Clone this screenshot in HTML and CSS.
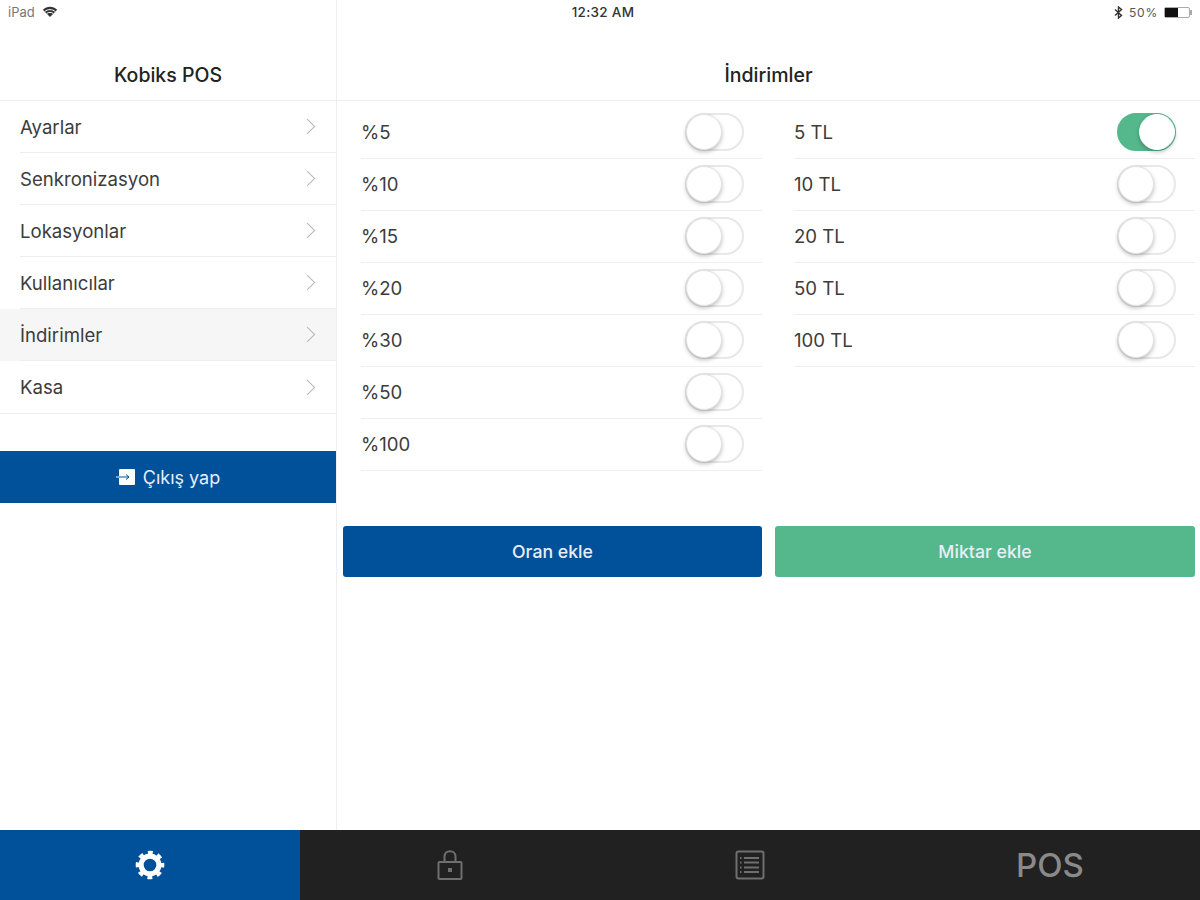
FILE: index.html
```html
<!DOCTYPE html>
<html>
  <head>
    <title>Kobiks POS</title>
    <link rel="stylesheet" href="styles.css">
  </head>
  <body>
    <div class="app">
      <div class="status-bar">
        <div class="status-left">
          <span>iPad</span>
          <svg class="wifi" width="16" height="12" viewBox="0 0 16 12">
            <path d="M8 11 .8 3.800C5-.3 11-.3 15.200 3.800Z" fill="#333"/>
            <path d="M2.800 5.500C5.700 3 10.300 3 13.200 5.500M4.700 7.500C6.600 6 9.400 6 11.300 7.500" stroke="#fff" stroke-width="1" fill="none"/>
          </svg>
        </div>
        <div class="status-time">12:32 AM</div>
        <div class="status-right">
          <svg width="9" height="13" viewBox="0 0 9 13">
            <path d="M1 3.500 7.500 9.500 4.500 12V1L7.500 3.500 1 9.500" stroke="#333" stroke-width="1.400" fill="none"/>
          </svg>
          <span class="status-percent">50%</span>
          <span class="battery"><span class="battery-level"></span></span>
        </div>
      </div>

      <div class="content">
        <div class="sidebar">
          <div class="nav-title">Kobiks POS</div>
          <div class="menu">
            <div class="menu-item"><div class="menu-row"><span>Ayarlar</span><span class="chevron"></span></div></div>
            <div class="menu-item"><div class="menu-row"><span>Senkronizasyon</span><span class="chevron"></span></div></div>
            <div class="menu-item"><div class="menu-row"><span>Lokasyonlar</span><span class="chevron"></span></div></div>
            <div class="menu-item"><div class="menu-row"><span>Kullanıcılar</span><span class="chevron"></span></div></div>
            <div class="menu-item active"><div class="menu-row"><span>İndirimler</span><span class="chevron"></span></div></div>
            <div class="menu-item last"><div class="menu-row"><span>Kasa</span><span class="chevron"></span></div></div>
          </div>
          <div class="logout">
            <svg width="20" height="16" viewBox="0 0 20 16">
              <rect x="3" y="0" width="16" height="16" rx="1" fill="#fff"/>
              <path d="M0 8H13M10 5.500 13 8 10 10.500" stroke="#01509a" stroke-width="1" fill="none"/>
              <path d="M0 8H3" stroke="#fff" stroke-width="1"/>
            </svg>
            <span>Çıkış yap</span>
          </div>
        </div>

        <div class="main">
          <div class="nav-title">İndirimler</div>
          <div class="columns">
            <div class="option-list">
              <div class="option"><span>%5</span><span class="toggle"></span></div>
              <div class="option"><span>%10</span><span class="toggle"></span></div>
              <div class="option"><span>%15</span><span class="toggle"></span></div>
              <div class="option"><span>%20</span><span class="toggle"></span></div>
              <div class="option"><span>%30</span><span class="toggle"></span></div>
              <div class="option"><span>%50</span><span class="toggle"></span></div>
              <div class="option"><span>%100</span><span class="toggle"></span></div>
            </div>
            <div class="option-list">
              <div class="option"><span>5 TL</span><span class="toggle on"></span></div>
              <div class="option"><span>10 TL</span><span class="toggle"></span></div>
              <div class="option"><span>20 TL</span><span class="toggle"></span></div>
              <div class="option"><span>50 TL</span><span class="toggle"></span></div>
              <div class="option"><span>100 TL</span><span class="toggle"></span></div>
            </div>
          </div>
          <div class="columns actions">
            <div class="btn btn-blue">Oran ekle</div>
            <div class="btn btn-green">Miktar ekle</div>
          </div>
        </div>
      </div>

      <div class="tab-bar">
        <div class="tab active">
          <svg width="30" height="30" viewBox="0 0 32 32">
            <circle cx="16" cy="16" r="9.500" fill="none" stroke="#fff" stroke-width="5.500"/>
            <circle cx="16" cy="16" r="13.500" fill="none" stroke="#fff" stroke-width="3.500" stroke-dasharray="5.300 5.300" stroke-dashoffset="2.650"/>
          </svg>
        </div>
        <div class="tab">
          <svg width="26" height="32" viewBox="0 0 26 32" fill="none" stroke="#6f6f6f" stroke-width="2">
            <rect x="1.500" y="13" width="23" height="17" rx="1"/>
            <path d="M7.500 13V7.500C7.500 .5 18.500 .5 18.500 7.500V13"/>
            <rect x="11" y="19" width="4" height="4" fill="#6f6f6f" stroke="none"/>
          </svg>
        </div>
        <div class="tab">
          <svg width="30" height="30" viewBox="0 0 30 30" fill="none" stroke="#6f6f6f">
            <rect x="1.500" y="1.500" width="27" height="27" rx="2" stroke-width="2"/>
            <path d="M9 8H24M9 12.500H24M9 17.500H24M9 22H24" stroke-width="2"/>
            <path d="M5 8H6.500M5 12.500H6.500M5 17.500H6.500M5 22H6.500" stroke-width="2"/>
          </svg>
        </div>
        <div class="tab tab-pos">POS</div>
      </div>
    </div>
  </body>
</html>
```

FILE: styles.css
```css
body {
  margin: 0;
  background-color: #fff;
  color: #3c3c3c;
  font-family: Inter, Roboto, Arial, sans-serif;
  font-size: 18.600px;
}
.app {
  position: relative;
  display: flex;
  flex-flow: column nowrap;
  width: 1200px;
  height: 900px;
  overflow: hidden;
}

/* status bar lies over both panes */
.status-bar {
  position: absolute;
  top: 0;
  left: 0;
  right: 0;
  height: 24px;
  padding: 0 7px 0 8px;
  display: grid;
  grid-template-columns: 1fr auto 1fr;
  align-items: center;
  font-size: 12px;
  color: #555;
}
.status-left {
  display: flex;
  align-items: center;
  gap: 7px;
  font-size: 13px;
  color: #777;
}
.status-time {
  margin-left: 5px;
  font-size: 13.500px;
  letter-spacing: 0.3px;
  font-weight: 500;
  color: #333;
}
.status-right {
  display: flex;
  align-items: center;
  justify-content: flex-end;
  gap: 6px;
}
.status-percent {
  letter-spacing: 0.8px;
}
.battery {
  display: block;
  position: relative;
  width: 26px;
  height: 11px;
  margin-right: 3px;
  border: 1px solid #aaa;
  border-radius: 2px;
  box-sizing: border-box;
}
.battery::after {
  content: "";
  position: absolute;
  top: 2px;
  right: -3px;
  width: 2px;
  height: 5px;
  background-color: #aaa;
}
.battery-level {
  display: block;
  width: 13px;
  height: 9px;
  background-color: #111;
}

.content {
  flex: 1;
  display: flex;
  flex-flow: row nowrap;
}
.sidebar {
  width: 336px;
  border-right: 1px solid #eee;
}
.main {
  flex: 1;
}
.nav-title {
  height: 101px;
  padding-top: 63px;
  box-sizing: border-box;
  line-height: 24px;
  text-align: center;
  font-size: 19.500px;
  font-weight: 500;
  color: #222;
  border-bottom: 1px solid #eee;
}

.menu-item {
  height: 52px;
}
.menu-item.active {
  background-color: #f6f6f6;
}
.menu-row {
  height: 52px;
  margin-left: 20px;
  padding-right: 19px;
  display: flex;
  align-items: center;
  justify-content: space-between;
  box-sizing: border-box;
  border-bottom: 1px solid #eee;
}
.menu-item.last {
  height: 53px;
  border-bottom: 1px solid #eee;
  box-sizing: border-box;
}
.menu-item.last .menu-row {
  border-bottom: none;
}
.chevron {
  width: 10px;
  height: 10px;
  margin-right: 4px;
  border-top: 1.500px solid #b5b5b5;
  border-right: 1.500px solid #b5b5b5;
  transform: rotate(45deg);
}
.logout {
  height: 52px;
  margin-top: 37px;
  display: flex;
  align-items: center;
  justify-content: center;
  gap: 7px;
  font-size: 18px;
  background-color: #01509a;
  color: #e8eef6;
}

.columns {
  display: grid;
  grid-template-columns: 419px 420px;
  gap: 13px;
  padding-left: 6px;
}
.option-list {
  padding-top: 6px;
  padding-left: 18px;
}
.option-list + .option-list {
  padding-left: 19px;
}
.option-list + .option-list .option {
  padding-right: 19px;
}
.option {
  height: 52px;
  padding-right: 18px;
  padding-bottom: 1px;
  display: flex;
  align-items: center;
  justify-content: space-between;
  box-sizing: border-box;
  border-bottom: 1px solid #eee;
}
.toggle {
  display: block;
  width: 59px;
  height: 38px;
  box-sizing: border-box;
  border: 2px solid #e8e8e8;
  border-radius: 19px;
  background-color: #fff;
  position: relative;
}
.toggle::after {
  content: "";
  position: absolute;
  top: -1px;
  left: -1px;
  width: 36px;
  height: 36px;
  box-sizing: border-box;
  border: 1px solid #e2e2e2;
  border-radius: 50%;
  background-color: #fff;
  box-shadow: 0 2px 4px rgba(0, 0, 0, 0.25);
}
.toggle.on {
  background-color: #55b88c;
  border-color: #55b88c;
}
.toggle.on::after {
  left: 20px;
  border-color: #fff;
}

.actions {
  margin-top: 55px;
}
.btn {
  height: 51px;
  display: flex;
  align-items: center;
  justify-content: center;
  border-radius: 3px;
  font-size: 17.700px;
  font-weight: 500;
  color: #e8eef6;
}
.btn-blue {
  background-color: #01509a;
}
.btn-green {
  background-color: #55b88c;
}

.tab-bar {
  height: 70px;
  display: grid;
  grid-template-columns: repeat(4, 1fr);
  background-color: #212121;
}
.tab {
  display: flex;
  align-items: center;
  justify-content: center;
}
.tab.active {
  background-color: #01509a;
}
.tab-pos {
  font-size: 33px;
  font-weight: 500;
  color: #8a8a8a;
}
```
